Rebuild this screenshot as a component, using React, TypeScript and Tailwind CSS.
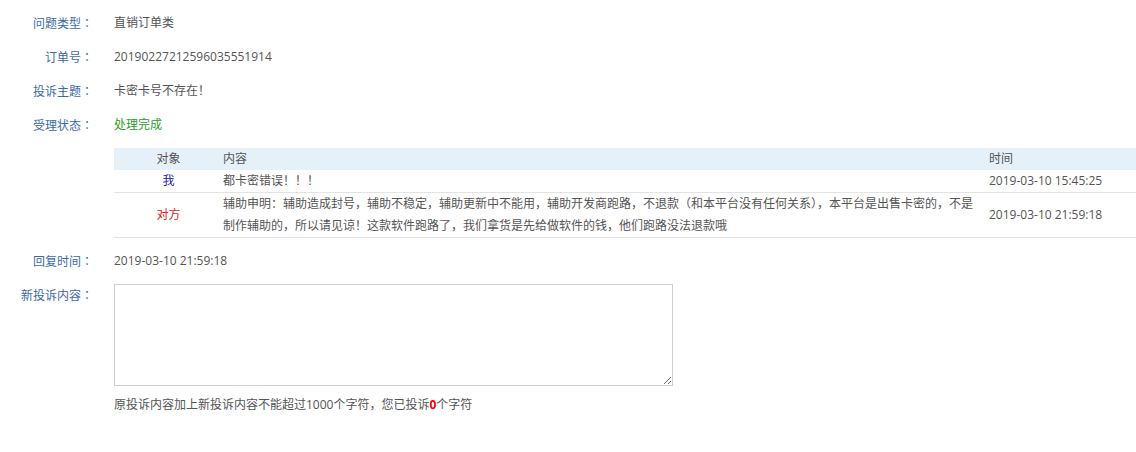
const font = { fontFamily: '"Open Sans", "Noto Sans CJK SC", sans-serif' };

function Colon() {
  return <span style={{ fontFamily: '"Noto Sans CJK JP", sans-serif' }}>：</span>;
}

function Field({ label, children }: { label: string; children: React.ReactNode }) {
  return (
    <div className="flex h-[34px] items-center">
      <div className="w-[93px] shrink-0 text-right text-[#3d6aa8]">
        {label}
        <Colon />
      </div>
      <div className="ml-[21px] text-[#555]">{children}</div>
    </div>
  );
}

export default function App() {
  return (
    <div className="min-h-screen bg-white text-[12px] text-[#555] pt-[6px]" style={font}>
      {/* --- Basic info --- */}
      <Field label="问题类型">直销订单类</Field>
      <Field label="订单号">20190227212596035551914</Field>
      <Field label="投诉主题">卡密卡号不存在！</Field>
      <Field label="受理状态">
        <span className="text-[#2d9a2d]">处理完成</span>
      </Field>

      {/* --- Message history --- */}
      <div className="ml-[114px] mt-[6px] leading-[22px]">
        <div className="grid grid-cols-[109px_766px_1fr] bg-[#e6f0f8]">
          <div className="text-center">对象</div>
          <div>内容</div>
          <div>时间</div>
        </div>
        <div className="grid grid-cols-[109px_766px_1fr] items-center border-b border-[#e3e3e3]">
          <div className="text-center text-[#1a1ab0]">我</div>
          <div>都卡密错误！！！</div>
          <div>2019-03-10 15:45:25</div>
        </div>
        <div className="grid grid-cols-[109px_766px_1fr] items-center border-b border-[#e3e3e3]">
          <div className="text-center text-[#e31d1d]">对方</div>
          <div className="pr-[6px]">
            辅助申明：辅助造成封号，辅助不稳定，辅助更新中不能用，辅助开发商跑路，不退款（和本平台没有任何关系），本平台是出售卡密的，不是制作辅助的，所以请见谅！这款软件跑路了，我们拿货是先给做软件的钱，他们跑路没法退款哦
          </div>
          <div>2019-03-10 21:59:18</div>
        </div>
      </div>

      <div className="mt-[6px]">
        <Field label="回复时间">2019-03-10 21:59:18</Field>
      </div>

      {/* --- New complaint --- */}
      <div className="mt-[6px] flex leading-[22px]">
        <div className="w-[93px] shrink-0 text-right text-[#3d6aa8]">
          新投诉内容
          <Colon />
        </div>
        <div className="ml-[21px]">
          <textarea className="block h-[102px] w-[559px] border border-[#cfcfcf] bg-white" />
          <p className="mt-[8px]">
            原投诉内容加上新投诉内容不能超过1000个字符，您已投诉
            <span className="font-bold text-[#e00]">0</span>个字符
          </p>
        </div>
      </div>
    </div>
  );
}
